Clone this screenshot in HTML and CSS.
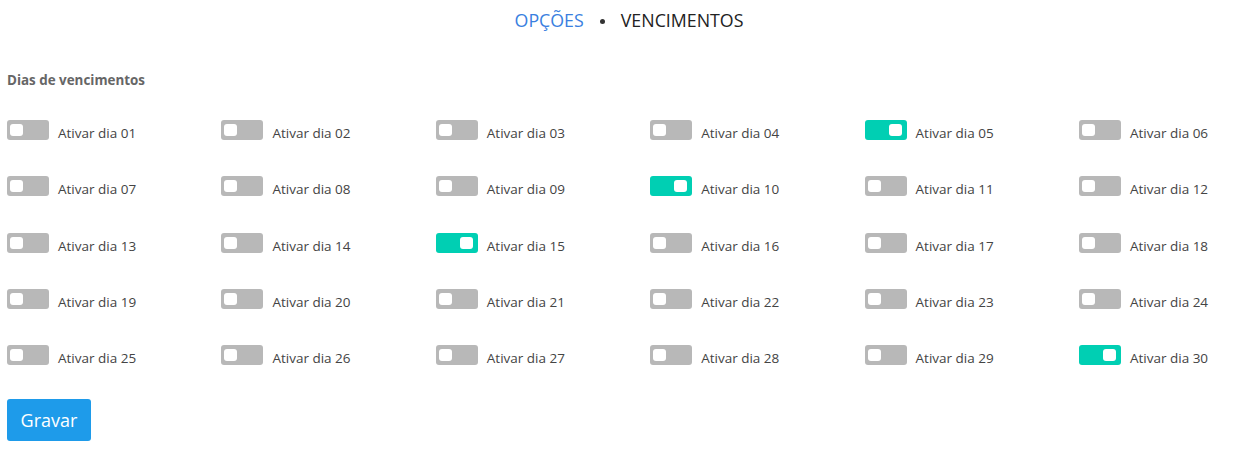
FILE: index.html
```html
<!DOCTYPE html>
<html lang="pt">
<head>
<meta charset="utf-8">
<link rel="stylesheet" href="styles.css">
</head>
<body>
<nav class="crumbs"><a class="crumb-link">OPÇÕES</a><span class="dot"></span><span class="crumb-current">VENCIMENTOS</span></nav>
<form class="form">
  <h6 class="section-title">Dias de vencimentos</h6>
  <div class="grid" id="grid"></div>
  <button type="button" class="btn">Gravar</button>
</form>
<script>
  var on = [5, 10, 15, 30];
  var g = document.getElementById('grid');
  for (var i = 1; i <= 30; i++) {
    var d = (i < 10 ? '0' : '') + i;
    var el = document.createElement('label');
    el.className = 'item';
    el.innerHTML = '<span class="toggle' + (on.indexOf(i) >= 0 ? ' on' : '') + '"><span class="knob"></span></span><span class="label">Ativar dia ' + d + '</span>';
    g.appendChild(el);
  }
</script>
</body>
</html>
```
FILE: styles.css
```css
html, body { margin: 0; padding: 0; }
body {
  font-family: "Open Sans", "Noto Sans", sans-serif;
  color: #333;
  background: #fff;
  overflow: hidden;
  width: 1240px;
  height: 460px;
}
.crumbs {
  display: flex;
  justify-content: center;
  align-items: center;
  height: 40px;
  padding-left: 18px;
  font-size: 17.8px;
}
.crumb-link { color: #3a7fe0; }
.dot {
  width: 5px;
  height: 5px;
  border-radius: 50%;
  background: #333;
  margin: 2px 16px 0 16px;
}
.crumb-current { color: #222; }
.form { padding: 0 7px; }
.section-title {
  margin: 31px 0 0;
  font-size: 13.4px;
  font-weight: 700;
  color: #666;
  line-height: 18px;
}
.grid {
  display: grid;
  grid-template-columns: repeat(6, 214.4px);
  grid-auto-rows: 56.3px;
  margin-top: 30px;
}
.item { display: flex; align-items: flex-start; gap: 9px; }
.toggle {
  width: 42px;
  height: 20px;
  border-radius: 3px;
  background: #b8b8b8;
  display: flex;
  align-items: center;
  padding: 0 3px;
  box-sizing: border-box;
  margin-top: 1px;
}
.toggle.on { background: #00cfb3; justify-content: flex-end; padding: 0 5px; }
.knob {
  width: 13px;
  height: 12px;
  border-radius: 3px;
  background: #fff;
}
.label { font-size: 13.5px; line-height: 24px; color: #444; margin-top: 2px; }
.btn {
  margin-top: -1px;
  width: 84px;
  height: 42px;
  border: 0;
  border-radius: 3px;
  background: #1e9bea;
  color: #fff;
  font-family: inherit;
  font-size: 18px;
  padding: 0;
}
```
